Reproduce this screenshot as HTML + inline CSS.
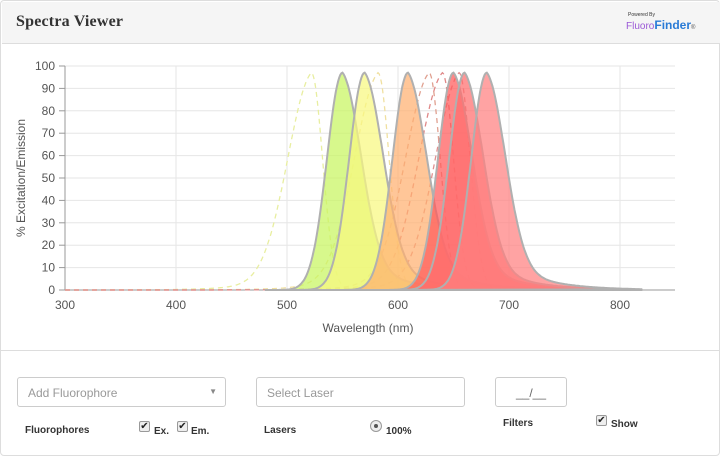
<!DOCTYPE html>
<html><head><meta charset="utf-8"><style>
*{box-sizing:border-box;margin:0;padding:0}
body{width:720px;height:456px;background:#fff;font-family:"Liberation Sans",sans-serif;overflow:hidden}
.wrap{position:absolute;left:0;top:0;width:720px;height:456px;border:1px solid #ddd;border-radius:4px}
.hdr{position:absolute;left:1px;top:1px;width:718px;height:42px;background:#f5f5f5;border-bottom:1px solid #ddd}
.hdr h1{position:absolute;left:14px;top:11px;font-family:"Liberation Serif",serif;font-size:16px;font-weight:bold;color:#333;letter-spacing:0.2px}
.logo{position:absolute;left:624px;top:10px;font-size:10px}
.mid{position:absolute;left:0;top:349px;width:720px;border-top:1px solid #ddd}
.inp{position:absolute;height:30px;border:1px solid #ccc;border-radius:3px;font-size:12px;color:#999;padding:8px 10px;background:#fff}
.lbl{position:absolute;font-size:10px;font-weight:bold;color:#333}
.cb{position:absolute;width:11px;height:11px;border:1px solid #999;background:#eee;border-radius:2px;font-size:10px;line-height:9px;text-align:center;color:#222}
</style></head><body>
<div class="wrap">
<div class="hdr"><h1>Spectra Viewer</h1>
<div class="logo"><div style="font-size:5px;color:#333;margin-left:2px">Powered By</div><span style="color:#9b59d6;font-size:10px">Fluoro</span><span style="color:#2a7bd6;font-weight:bold;font-size:12px">Finder</span><span style="font-size:6px;color:#555">®</span></div>
</div>
<svg id="ch" width="720" height="350" style="position:absolute;left:0;top:0"></svg>
<div class="mid"></div>
<div class="inp" style="left:16px;top:376px;width:209px">Add Fluorophore<span style="position:absolute;right:8px;top:9px;font-size:8px;color:#888">▼</span></div>
<div class="inp" style="left:255px;top:376px;width:209px">Select Laser</div>
<div class="inp" style="left:494px;top:376px;width:72px;color:#666;text-align:center">__/__</div>
<div class="lbl" style="left:24px;top:424px">Fluorophores</div>
<div class="cb" style="left:138px;top:420px">✔</div><div class="lbl" style="left:153px;top:425px">Ex.</div>
<div class="cb" style="left:176px;top:420px">✔</div><div class="lbl" style="left:190px;top:425px">Em.</div>
<div class="lbl" style="left:263px;top:424px">Lasers</div>
<div style="position:absolute;left:369px;top:419px;width:12px;height:12px;border:1px solid #999;border-radius:50%;background:#eee"><div style="margin:3px;width:4px;height:4px;border-radius:50%;background:#555"></div></div>
<div class="lbl" style="left:385px;top:425px">100%</div>
<div class="lbl" style="left:502px;top:417px">Filters</div>
<div class="cb" style="left:595px;top:414px">✔</div><div class="lbl" style="left:610px;top:418px">Show</div>
</div>
<script>
var s=document.getElementById('ch'),h='';
function X(n){return 64+(n-300)*1.11}function Y(v){return 289-v*2.24}
for(var i=0;i<=10;i++){var y=Y(i*10);h+='<line x1="64" x2="674" y1="'+y+'" y2="'+y+'" stroke="#e6e6e6"/><line x1="58" x2="64" y1="'+y+'" y2="'+y+'" stroke="#999"/><text x="54" y="'+(y+4)+'" font-size="12" fill="#555" text-anchor="end" font-family="Liberation Sans">'+(i*10)+'</text>';}
for(var n=300;n<=800;n+=100){var x=X(n);h+='<line x1="'+x+'" x2="'+x+'" y1="65" y2="289" stroke="#e6e6e6"/><text x="'+x+'" y="308" font-size="12" fill="#555" text-anchor="middle" font-family="Liberation Sans">'+n+'</text>';}
h+='<line x1="64" x2="64" y1="65" y2="289" stroke="#999"/><line x1="64" x2="674" y1="289" y2="289" stroke="#999"/>';
h+='<text x="367" y="331" font-size="12" fill="#555" text-anchor="middle" font-family="Liberation Sans">Wavelength (nm)</text>';
h+='<text transform="translate(24,177) rotate(-90)" font-size="12" fill="#555" text-anchor="middle" font-family="Liberation Sans">% Excitation/Emission</text>';
function em(p,n){var d=n-p;if(d<0)return 100*Math.exp(-d*d/(2*14*14));return 100*(0.8*Math.exp(-d*d/(2*17*17))+0.2*Math.exp(-d/35));}
function ex(p,n){var d=n-p;if(d>0)return 100*Math.exp(-d*d/(2*10*10));return 100*(0.85*Math.exp(-d*d/(2*22*22))+0.15*Math.exp(d/30));}
function path(f,p,a,b){var d='M'+X(a)+','+Y(0);for(var n=a;n<=b;n+=1)d+=' L'+X(n).toFixed(1)+','+Y(f(p,n)*0.97).toFixed(1);return d;}
var exs=[[522,'#e8eea0'],[582,'#f0e0a0'],[628,'#e0a090'],[640,'#e08888'],[655,'#e09090']];
exs.forEach(function(e){h+='<path d="'+path(ex,e[0],300,720)+'" fill="none" stroke="'+e[1]+'" stroke-width="1.3" stroke-dasharray="5,4"/>';});
var ems=[[550,'#c8f560'],[570,'#f8f880'],[609,'#ffb070'],[650,'#ff5a5a'],[660,'#ff6e6e'],[680,'#ff8080']];
ems.forEach(function(e){var d=path(em,e[0],e[0]-70,820);h+='<path d="'+d+' Z" fill="'+e[1]+'" fill-opacity="0.72" stroke="#b0b0b0" stroke-width="2"/>';});
s.innerHTML=h;
</script>
</body></html>
